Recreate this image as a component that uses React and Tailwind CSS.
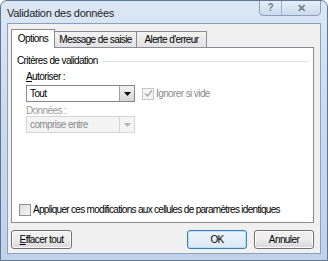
import React from "react";

function Check({ disabled, checked }) {
  return (
    <span
      className={`flex h-[12px] w-[12px] shrink-0 items-center justify-center border ${
        disabled ? "border-[#c5c5c5] bg-[#f4f4f4]" : "border-[#8f8f8f] bg-gradient-to-br from-[#dcdcdc] to-[#f8f8f8]"
      }`}
    >
      {checked && (
        <svg width="9" height="9" viewBox="0 0 9 9">
          <path d="M1 4.5 L3.5 7 L8 1.5" fill="none" stroke="#a9a9a9" strokeWidth="1.4" />
        </svg>
      )}
    </span>
  );
}

function Arrow({ disabled }) {
  return (
    <span
      className={`flex h-full w-[15px] items-center justify-center border-l ${
        disabled ? "border-[#d5d5d5] bg-[#f4f4f4]" : "border-[#a0a0a0] bg-gradient-to-b from-[#f2f2f2] to-[#d6d6d6]"
      }`}
    >
      <svg width="7" height="4" viewBox="0 0 7 4">
        <path d="M0 0 H7 L3.5 4 Z" fill={disabled ? "#b4b4b4" : "#000"} />
      </svg>
    </span>
  );
}

function Btn({ children, def, className = "" }) {
  return (
    <div
      className={`flex h-[19px] items-center justify-center rounded-[3px] border ${
        def
          ? "border-[#3c7fb1] bg-gradient-to-b from-[#ecf4fb] to-[#dbe9f5] shadow-[inset_0_0_0_1px_#b6e0f7]"
          : "border-[#707070] bg-gradient-to-b from-[#f2f2f2] via-[#ebebeb] to-[#d7d7d7] shadow-[inset_0_0_0_1px_#fcfcfc]"
      } ${className}`}
    >
      {children}
    </div>
  );
}

export default function App() {
  return (
    <div
      className="flex h-[261px] w-[328px] flex-col overflow-hidden rounded-t-[7px] border border-[#5f7694] bg-gradient-to-b from-[#dce7f5] via-[#c9d9ee] to-[#bfd2ea] text-[10px] leading-[12px] tracking-[-0.6px] text-[#000]"
      style={{ fontFamily: '"Liberation Sans", Arial, sans-serif' }}
    >
      <div className="relative flex h-[22px] shrink-0 items-center pl-[6px] pt-[2px] text-[11px] tracking-[-0.3px] text-[#1e1e1e]">
        Validation des données
        <div className="absolute right-[6px] top-[-1px] flex h-[16px] overflow-hidden rounded-b-[4px] border border-[#8ea0b8] bg-gradient-to-b from-[#e6eef8] to-[#ccdaec]">
          <div className="flex w-[22px] items-center justify-center border-r border-[#9fb1c8] text-[10px] font-bold text-[#6d7d90]">?</div>
          <div className="flex w-[38px] items-center justify-center text-[11px] font-bold text-[#6d7d90]">✕</div>
        </div>
      </div>
      <div className="mx-[6px] mb-[6px] flex flex-1 flex-col border border-[#8da0ba] bg-[#f0f0f0] pl-[3px] pr-[6px] pt-[4px]">
        {/* tabs */}
        <div className="flex h-[19px] items-end whitespace-nowrap">
          <div className="z-10 -mb-px flex h-[19px] w-[44px] items-center justify-center border border-b-0 border-[#898c95] bg-white">Options</div>
          <div className="flex h-[16px] w-[82px] items-center justify-center border-r border-t border-[#898c95] bg-gradient-to-b from-[#f2f2f2] to-[#e3e3e3]">Message de saisie</div>
          <div className="flex h-[16px] w-[70px] items-center justify-center border-r border-t border-[#898c95] bg-gradient-to-b from-[#f2f2f2] to-[#e3e3e3]">Alerte d'erreur</div>
        </div>
        <div className="flex h-[176px] flex-col border border-[#898c95] bg-white px-[5px] pt-[7px]">
          <div className="flex items-center gap-[5px]">
            <span>Critères de validation</span>
            <span className="h-px flex-1 bg-[#dde3e8]" />
          </div>
          <div className="mt-[4px] pl-[9px]">
            <div>
              <span className="underline">A</span>utoriser :
            </div>
            <div className="mt-[2px] flex items-center">
              <div className="flex h-[17px] w-[109px] items-stretch border border-[#828790] bg-white">
                <span className="flex-1 pl-[3px] leading-[15px]">Tout</span>
                <Arrow />
              </div>
              <div className="ml-[7px] flex items-center gap-[2px] text-[#8a8a8a]">
                <Check disabled checked />
                <span>Ignorer si vide</span>
              </div>
            </div>
            <div className="mt-[3px] leading-[11px] text-[#9a9a9a]">Données :</div>
            <div className="flex h-[17px] w-[109px] items-stretch border border-[#d5d5d5] bg-[#f4f4f4] text-[#8a8a8a]">
              <span className="flex-1 pl-[3px] leading-[15px]">comprise entre</span>
              <Arrow disabled />
            </div>
          </div>
          <div className="mt-auto mb-[6px] flex items-center gap-[2px] whitespace-nowrap pl-[2px]">
            <Check />
            <span className="tracking-[-0.7px]">Appliquer ces modifications aux cellules de paramètres identiques</span>
          </div>
        </div>
        <div className="mt-[7px] flex">
          <Btn className="w-[61px]">
            <span>
              <span className="underline">E</span>ffacer tout
            </span>
          </Btn>
          <Btn def className="ml-auto w-[60px]">OK</Btn>
          <Btn className="ml-[7px] w-[60px]">Annuler</Btn>
        </div>
      </div>
    </div>
  );
}
